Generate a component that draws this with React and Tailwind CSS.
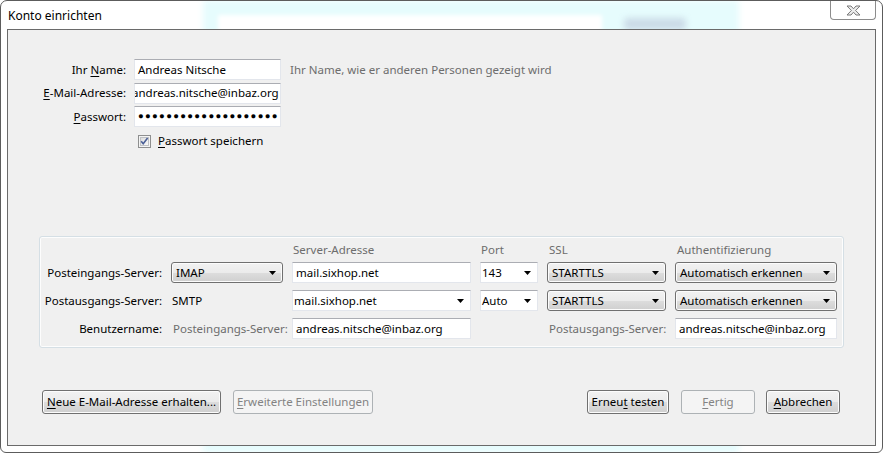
import React from 'react';

const Arrow = () => (
  <svg width="7" height="4" viewBox="0 0 7 4" className="shrink-0">
    <path d="M0 0h7L3.5 4z" fill="#000" />
  </svg>
);

const u = (ch) => <span className="underline underline-offset-[2px]">{ch}</span>;

const TextBox = ({ children, className = '' }) => (
  <div
    className={`h-[21px] flex items-center overflow-hidden whitespace-nowrap bg-white border border-[#e3e6ec] border-t-[#abadb3] pl-[3px] ${className}`}
  >
    {children}
  </div>
);

const DropDown = ({ value }) => (
  <div className="h-[21px] flex items-center justify-between rounded-[3px] border border-[#707070] bg-[linear-gradient(#f2f2f2_0%,#ebebeb_50%,#dddddd_51%,#cfcfcf_100%)] shadow-[inset_0_0_0_1px_#fcfcfc] pl-[4px] pr-[6px]">
    <span>{value}</span>
    <Arrow />
  </div>
);

const EditCombo = ({ value }) => (
  <div className="h-[21px] flex items-center justify-between bg-white border border-[#e3e6ec] border-t-[#abadb3] pl-[1px] pr-[6px]">
    <span>{value}</span>
    <Arrow />
  </div>
);

const Button = ({ children, disabled, className = '' }) => (
  <div
    className={`h-[24px] flex items-center justify-center rounded-[3px] border ${
      disabled
        ? 'border-[#adb2b5] bg-[#f4f4f4] text-[#838383]'
        : 'border-[#707070] bg-[linear-gradient(#f2f2f2_0%,#ebebeb_50%,#dddddd_51%,#cfcfcf_100%)] shadow-[inset_0_0_0_1px_#fcfcfc]'
    } ${className}`}
  >
    <span className="whitespace-nowrap">{children}</span>
  </div>
);

const cols = 'grid grid-cols-[122px_112px_179px_58px_119px_162px] gap-x-[9px] items-center';

export default function App() {
  return (
    <div className="relative w-[883px] h-[453px] bg-white overflow-hidden font-['Noto_Sans',sans-serif] text-[11.5px] text-black">
      {/* blurred desktop behind the frame */}
      <div className="absolute left-[203px] top-0 w-[536px] h-[453px] bg-[#e6fcfd] blur-[3px]" />
      <div className="absolute left-[218px] top-[15px] w-[384px] h-[30px] bg-white blur-[2px]" />
      <div className="absolute left-[624px] top-[18px] w-[62px] h-[12px] rounded bg-[#cbdbe7] blur-[3px]" />

      <div className="relative h-full flex flex-col rounded-t-[7px] rounded-b-[6px] border border-[#5c5c5c]">
        <div className="h-[28px] flex justify-between">
          <span className="pl-[7px] pt-[6px] text-[12px]">Konto einrichten</span>
          <div className="mr-[6px] w-[46px] h-[19px] flex items-center justify-center rounded-b-[4px] border border-t-0 border-[#8c8c8c] bg-white">
            <svg width="15" height="11" viewBox="0 0 15 11">
              <path
                d="M1 1h4L7.5 3.8 10 1h4L9.6 5.5 14 10h-4L7.5 7.2 5 10H1l4.4-4.5z"
                fill="#ececec"
                stroke="#7a7a7a"
                strokeWidth="1"
                strokeLinejoin="round"
              />
            </svg>
          </div>
        </div>

        <div className="flex-1 mx-[6px] mb-[6px] border border-[#6a6a6a] bg-[#f0f0f0] flex flex-col">
          {/* account fields */}
          <div className="mt-[29px] grid grid-cols-[118px_147px_auto] gap-x-[8px] gap-y-[2.5px] items-center">
            <span className="text-right">Ihr {u('N')}ame:</span>
            <TextBox>Andreas Nitsche</TextBox>
            <span className="pl-[1px] text-[#6d6d6d]">Ihr Name, wie er anderen Personen gezeigt wird</span>

            <span className="text-right">{u('E')}-Mail-Adresse:</span>
            <TextBox className="!pl-0">
              <span className="-ml-[3px]">andreas.nitsche@inbaz.org</span>
            </TextBox>
            <span />

            <span className="text-right">{u('P')}asswort:</span>
            <TextBox className="!pl-[3px]">
              <span className="font-['Liberation_Sans',sans-serif] text-[9.5px] tracking-[1.3px]">
                ●●●●●●●●●●●●●●●●●●●●
              </span>
            </TextBox>
            <span />
          </div>

          <div className="mt-[7px] h-[14px] pl-[130px] flex items-center gap-[7px]">
            <svg width="13" height="13" viewBox="0 0 13 13">
              <defs>
                <linearGradient id="cb" x1="0" y1="0" x2="1" y2="1">
                  <stop offset="0" stopColor="#dcdcdc" />
                  <stop offset="1" stopColor="#fbfbfb" />
                </linearGradient>
              </defs>
              <rect x="0.5" y="0.5" width="12" height="12" fill="#f4f4f4" stroke="#8e8f8f" />
              <rect x="2.5" y="2.5" width="8" height="8" fill="url(#cb)" stroke="#c0c2c5" />
              <path d="M3.2 6.3l2 2.4 4.4-5.6" fill="none" stroke="#4a5f97" strokeWidth="1.6" />
            </svg>
            <span>{u('P')}asswort speichern</span>
          </div>

          {/* server settings */}
          <div className="mt-[88px] ml-[31px] w-[805px] h-[112px] rounded-[3px] border border-[#d5dfe5] shadow-[inset_0_0_0_1px_#fdfdfd]">
            <div className={`${cols} mt-[4px] h-[16px] text-[#6d6d6d]`}>
              <span />
              <span />
              <span className="pl-[1px]">Server-Adresse</span>
              <span className="pl-[1px]">Port</span>
              <span className="pl-[2px]">SSL</span>
              <span className="pl-[2px]">Authentifizierung</span>
            </div>

            <div className={`${cols} mt-[5px]`}>
              <span className="text-right">Posteingangs-Server:</span>
              <DropDown value="IMAP" />
              <TextBox>mail.sixhop.net</TextBox>
              <EditCombo value="143" />
              <DropDown value="STARTTLS" />
              <DropDown value="Automatisch erkennen" />
            </div>

            <div className={`${cols} mt-[7px]`}>
              <span className="text-right">Postausgangs-Server:</span>
              <span className="pl-[1px]">SMTP</span>
              <EditCombo value="mail.sixhop.net" />
              <EditCombo value="Auto" />
              <DropDown value="STARTTLS" />
              <DropDown value="Automatisch erkennen" />
            </div>

            <div className={`${cols} mt-[7px]`}>
              <span className="text-right">Benutzername:</span>
              <span className="pl-[2px] text-[#6d6d6d] whitespace-nowrap">Posteingangs-Server:</span>
              <TextBox>andreas.nitsche@inbaz.org</TextBox>
              <span />
              <span className="pl-[2px] text-[#6d6d6d] whitespace-nowrap">Postausgangs-Server:</span>
              <TextBox>andreas.nitsche@inbaz.org</TextBox>
            </div>
          </div>

          {/* buttons */}
          <div className="mt-auto mb-[31px] flex items-center pl-[34px] pr-[35px]">
            <Button className="w-[179px]">{u('N')}eue E-Mail-Adresse erhalten...</Button>
            <Button disabled className="ml-[12px] w-[140px]">
              {u('E')}rweiterte Einstellungen
            </Button>
            <Button className="ml-auto w-[82px]">Erneu{u('t')} testen</Button>
            <Button disabled className="ml-[12px] w-[74px]">
              {u('F')}ertig
            </Button>
            <Button className="ml-[11px] w-[74px]">{u('A')}bbrechen</Button>
          </div>
        </div>
      </div>
    </div>
  );
}
